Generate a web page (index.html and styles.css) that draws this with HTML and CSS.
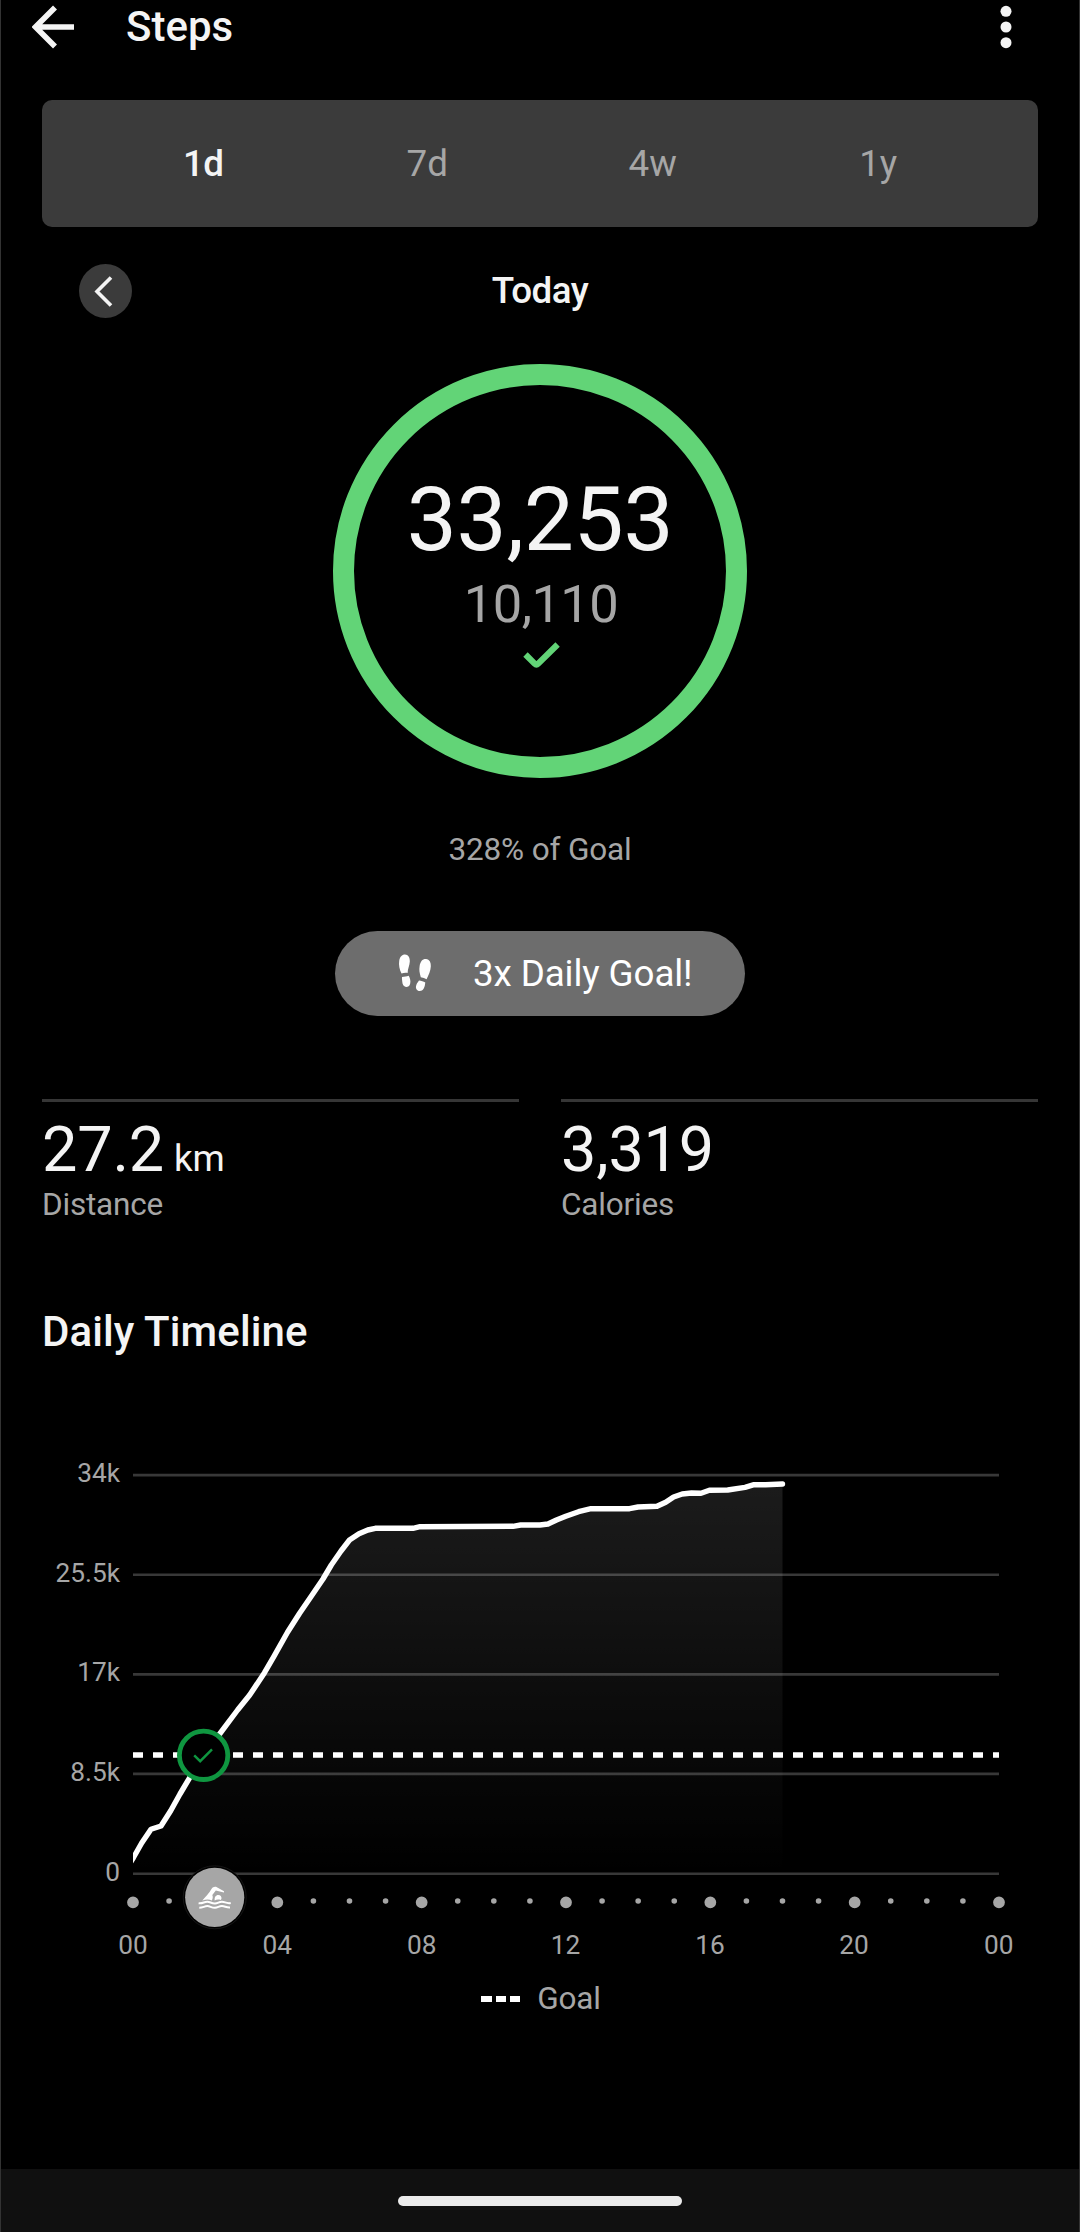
FILE: index.html
```html
<!DOCTYPE html>
<html lang="en">
<head>
<meta charset="utf-8">
<title>Steps</title>
<link rel="stylesheet" href="styles.css">
</head>
<body>
<div class="screen">
  <header class="header">
    <svg class="back" width="44" height="44" viewBox="0 0 44 44"><path d="M42 22H4M23 2.500L3.500 22L23 41.500" fill="none" stroke="#f4f4f4" stroke-width="5.600"/></svg>
    <h1 class="title">Steps</h1>
    <svg class="more" width="12" height="44" viewBox="0 0 12 44" fill="#f4f4f4"><circle cx="6" cy="6.300" r="5.500"/><circle cx="6" cy="22" r="5.500"/><circle cx="6" cy="37.700" r="5.500"/></svg>
  </header>

  <nav class="tabs">
    <span class="tab active">1d</span>
    <span class="tab">7d</span>
    <span class="tab">4w</span>
    <span class="tab">1y</span>
  </nav>

  <div class="date-row">
    <span class="prev"><svg width="53" height="54" viewBox="0 0 53 54"><path d="M32 13.500L18 27.500L32 41.500" fill="none" stroke="#f4f4f4" stroke-width="3.600"/></svg></span>
    <span class="date">Today</span>
  </div>

  <section class="ring">
    <div class="count">33,253</div>
    <div class="target">10,110</div>
    <svg class="done" width="38" height="28" viewBox="0 0 38 28"><path d="M2.500 12.500L11.600 21.600Q13.400 23.400 15.200 21.600L34.600 2.500" fill="none" stroke="#62d477" stroke-width="6.200"/></svg>
  </section>
  <p class="percent">328% of Goal</p>

  <div class="badge">
    <svg width="34" height="38" viewBox="0 0 34 38" fill="#fff">
      <path d="M3.500 19.500C1.500 15.500 0.600 11 1.200 7C1.800 3 4 0.600 7 0.600C10.200 0.800 12 3.500 11.800 7.500C11.600 12 9.700 14.500 9.600 19C7.500 18.700 5.500 18.900 3.500 19.500Z"/>
      <path d="M4 23C6.500 22.800 8.500 22.400 10.700 21.700C12 24 12.800 26.500 12.200 29.500C11.600 32.300 9.800 33 8 32.900C5.500 32.600 4.500 30.500 4.300 28C4.200 26.300 3.800 25 4 23Z"/>
      <path d="M22.800 23.300C21.500 18.500 21 16.500 21.600 12.300C22.300 7.500 24.600 4.900 28 5.100C31.500 5.400 33 8.500 32.800 12.500C32.600 17 30.600 21 28.600 25.200C26.800 24.300 25 23.600 22.800 23.300Z"/>
      <path d="M21 26.600C23.400 26.900 25.300 27.700 27.300 28.600C26.800 31 27 32.500 25.600 34.800C24.300 37 21.800 37.600 19.700 36.500C17.500 35.200 17.600 32.800 18.500 30.500C19.200 28.900 20.100 28.200 21 26.600Z"/>
    </svg>
    <span>3x Daily Goal!</span>
  </div>

  <section class="stats">
    <div class="stat">
      <div class="value">27.2<span class="unit">km</span></div>
      <div class="label">Distance</div>
    </div>
    <div class="stat">
      <div class="value">3,319</div>
      <div class="label">Calories</div>
    </div>
  </section>

  <h2 class="section-title">Daily Timeline</h2>

  <svg class="chart" width="1078" height="530" viewBox="1 1440 1078 530">
    <defs>
      <linearGradient id="fill" gradientUnits="userSpaceOnUse" x1="0" y1="1475" x2="0" y2="1874">
        <stop offset="0" stop-color="#fff" stop-opacity=".11"/>
        <stop offset="1" stop-color="#fff" stop-opacity="0"/>
      </linearGradient>
      <clipPath id="plot"><rect x="133" y="1440" width="866" height="434"/></clipPath>
    </defs>
    <path class="grid" d="M133 1475.100H999M133 1574.700H999M133 1674.400H999M133 1773.900H999M133 1873.700H999"/>
    <path fill="url(#fill)" d="M133.500 1858L141.700 1843L151 1829.300L161 1826L170.700 1810.700L180 1794L188.700 1779.300L204 1754L220 1733.500L237.600 1710L249.700 1695L264.500 1672.700L273.800 1656.700L287.500 1632.300L299.600 1613.300L311.600 1595.700L323 1579L331.300 1565L341 1551L349.500 1540L359 1533.700L367.800 1530L375.300 1528.300L413 1528.300L420 1526.700L513 1526.300L520.700 1525L540 1525L548 1524L556.500 1520L565.800 1516.300L578.600 1511.700L591 1508.700L629.500 1508.700L638 1507L657 1506.300L665.700 1502.300L673.600 1497L682.200 1494L691.500 1493L701 1493.300L709.400 1490.300L727.700 1490L745 1487.300L754 1484.700L765.600 1484.700L782.500 1484V1874H133.500Z"/>
    <path class="goal-line" d="M133 1755H999"/>
    <path class="series" clip-path="url(#plot)" d="M131 1861.500L133.500 1857.500L141.700 1843L151 1829.300L161 1826L170.700 1810.700L180 1794L188.700 1779.300L204 1754L220 1733.500L237.600 1710L249.700 1695L264.500 1672.700L273.800 1656.700L287.500 1632.300L299.600 1613.300L311.600 1595.700L323 1579L331.300 1565L341 1551L349.500 1540L359 1533.700L367.800 1530L375.300 1528.300L413 1528.300L420 1526.700L513 1526.300L520.700 1525L540 1525L548 1524L556.500 1520L565.800 1516.300L578.600 1511.700L591 1508.700L629.500 1508.700L638 1507L657 1506.300L665.700 1502.300L673.600 1497L682.200 1494L691.500 1493L701 1493.300L709.400 1490.300L727.700 1490L745 1487.300L754 1484.700L765.600 1484.700L782.500 1484"/>
    <circle cx="203.600" cy="1755.300" r="24.200" fill="#000" stroke="#0f9640" stroke-width="4.800"/>
    <path d="M194.200 1755.300L200.200 1761.200L212 1749.300" fill="none" stroke="#0f9640" stroke-width="2.400"/>

    <path class="hours" d="M133 1901H998"/>
    <path class="hours-major" d="M133 1902.300H1000"/>

    <circle cx="214.700" cy="1897.300" r="31.500" fill="#000" stroke="#1c1c1c" stroke-width=".8"/>
    <circle cx="214.700" cy="1897.300" r="29.600" fill="#a6a6a6"/>
    <g fill="#fff">
      <path d="M202.300 1900.500C205.500 1897 209 1893.500 211.800 1888.500C212.700 1887 214.500 1886.300 216 1886.800L224 1891.300V1892.400L215.800 1890.600L212.300 1895C213 1896.500 213 1898.500 211.800 1900.500C209 1899 205.500 1899.500 202.300 1900.500Z"/>
      <path d="M214.700 1900.400C214.300 1897.200 215.700 1894.900 218.300 1894.900C220.500 1894.900 221.700 1896.500 221.500 1898.500L220.800 1900C218.500 1899.200 216.500 1899.400 214.700 1900.400Z"/>
      <path d="M198.600 1903.300C203 1903.900 204 1901.500 207.500 1901.700C210 1901.900 212 1903.700 215 1903.500C218 1903.300 219 1901.600 222 1901.700C225 1901.800 226.500 1903.800 230.700 1903M199.300 1907.700C203 1907.700 204.500 1906 207.500 1906.100C210 1906.300 212 1908 215 1907.800C218 1907.600 219 1906 222 1906.100C225 1906.200 226.500 1907.800 230 1907.500" fill="none" stroke="#fff" stroke-width="2"/>
    </g>

    <g class="axis y">
      <text x="120" y="1482">34k</text>
      <text x="120" y="1582">25.5k</text>
      <text x="120" y="1681">17k</text>
      <text x="120" y="1781">8.5k</text>
      <text x="120" y="1881">0</text>
    </g>
    <g class="axis x">
      <text x="133" y="1953.500">00</text>
      <text x="277.300" y="1953.500">04</text>
      <text x="421.700" y="1953.500">08</text>
      <text x="565.500" y="1953.500">12</text>
      <text x="710" y="1953.500">16</text>
      <text x="854" y="1953.500">20</text>
      <text x="998.700" y="1953.500">00</text>
    </g>
  </svg>

  <div class="legend">
    <span class="dashes"><i></i><i></i><i></i></span>
    <span>Goal</span>
  </div>

  <footer class="gesture"><span class="handle"></span></footer>
</div>
</body>
</html>
```

FILE: styles.css
```css
* { box-sizing: border-box; }

body {
  margin: 0;
  background: #000;
  color: #f4f4f4;
  font-family: Roboto, "Liberation Sans", sans-serif;
}

.screen {
  display: flex;
  flex-direction: column;
  width: 1080px;
  height: 2232px;
  border: solid #333;
  border-width: 0 1px;
  overflow: hidden;
}

.header {
  display: flex;
  align-items: center;
  height: 54px;
  padding: 0 67px 0 31px;
}
.title {
  margin: 0 auto 0 50px;
  font-size: 42px;
  font-weight: 500;
  line-height: 54px;
}

.tabs {
  display: grid;
  grid-template-columns: repeat(4, 225.5px);
  justify-content: center;
  align-items: center;
  height: 127px;
  margin: 46px 41px 0;
  padding-bottom: 1px;
  background: #3b3b3b;
  border-radius: 10px;
}
.tab {
  color: #a6a6a6;
  font-size: 36.75px;
  text-align: center;
}
.tab.active {
  padding-left: 3px;
  color: #f4f4f4;
  font-weight: 500;
  letter-spacing: -0.5px;
}

.date-row {
  display: grid;
  grid-template-columns: 53px 1fr 53px;
  align-items: center;
  height: 54px;
  margin: 37px 78px 0;
}
.prev {
  width: 53px;
  height: 54px;
  border-radius: 50%;
  background: #3b3b3b;
}
.prev svg { display: block; }
.date {
  padding-bottom: 2px;
  font-size: 36.75px;
  font-weight: 500;
  letter-spacing: -0.5px;
  text-align: center;
}

.ring {
  display: flex;
  flex-direction: column;
  align-items: center;
  align-self: center;
  width: 414px;
  height: 414px;
  margin-top: 46.3px;
  padding-top: 90px;
  border: 21px solid #62d477;
  border-radius: 50%;
}
.count {
  font-size: 89.25px;
  letter-spacing: -0.3px;
  line-height: 90px;
}
.target {
  margin-top: 1px;
  padding-left: 2px;
  color: #a6a6a6;
  font-size: 52.5px;
  letter-spacing: -0.6px;
  line-height: 76px;
}
.done { margin-left: 3px; }

.percent {
  margin: 50.7px 0 0;
  color: #a6a6a6;
  font-size: 31.5px;
  letter-spacing: -0.15px;
  line-height: 42px;
  text-align: center;
}

.badge {
  display: flex;
  align-items: center;
  align-self: center;
  gap: 41px;
  width: 410px;
  height: 85px;
  margin-top: 60px;
  padding-left: 63px;
  border-radius: 43px;
  background: #6d6d6d;
  color: #fff;
  font-size: 36.75px;
  letter-spacing: -0.1px;
}

.stats {
  display: grid;
  grid-template-columns: 1fr 1fr;
  gap: 42px;
  margin: 83px 41px 0;
}
.stat {
  padding-top: 11px;
  border-top: 3px solid #363636;
}
.value {
  height: 73px;
  font-size: 63px;
  letter-spacing: -0.2px;
  line-height: 73px;
}
.unit {
  margin-left: 10px;
  font-size: 36.75px;
  line-height: 1;
}
.label {
  padding-top: 1px;
  color: #a6a6a6;
  font-size: 31.5px;
  letter-spacing: -0.2px;
  line-height: 35px;
}

.section-title {
  margin: 85px 41px 0;
  font-size: 42px;
  font-weight: 500;
  letter-spacing: 0.1px;
  line-height: 50px;
}

.chart {
  display: block;
  margin-top: 83px;
}
.grid {
  stroke: #383838;
  stroke-width: 2.6;
}
.goal-line {
  stroke: #fff;
  stroke-width: 5.5;
  stroke-dasharray: 10 10;
}
.series {
  fill: none;
  stroke: #fff;
  stroke-width: 5.4;
  stroke-linecap: round;
  stroke-linejoin: round;
}
.hours,
.hours-major {
  fill: none;
  stroke: #a6a6a6;
  stroke-linecap: round;
}
.hours {
  stroke-width: 5.6;
  stroke-dasharray: 0 36.083;
}
.hours-major {
  stroke-width: 11.8;
  stroke-dasharray: 0 144.333;
}
.axis {
  fill: #a6a6a6;
  font-size: 26.25px;
}
.axis.y { text-anchor: end; }
.axis.x { text-anchor: middle; }

.legend {
  display: flex;
  align-items: center;
  justify-content: center;
  gap: 17px;
  margin-top: 9px;
  padding-left: 2px;
  color: #a6a6a6;
  font-size: 31.5px;
  letter-spacing: -0.2px;
  line-height: 40px;
}
.dashes {
  display: flex;
  gap: 4px;
}
.dashes i {
  width: 10.3px;
  height: 6px;
  background: #fff;
}

.gesture {
  display: flex;
  justify-content: center;
  height: 63px;
  margin-top: auto;
  padding-top: 27px;
  background: #101010;
}
.handle {
  width: 284px;
  height: 10px;
  border-radius: 5px;
  background: #ebebeb;
}
```
